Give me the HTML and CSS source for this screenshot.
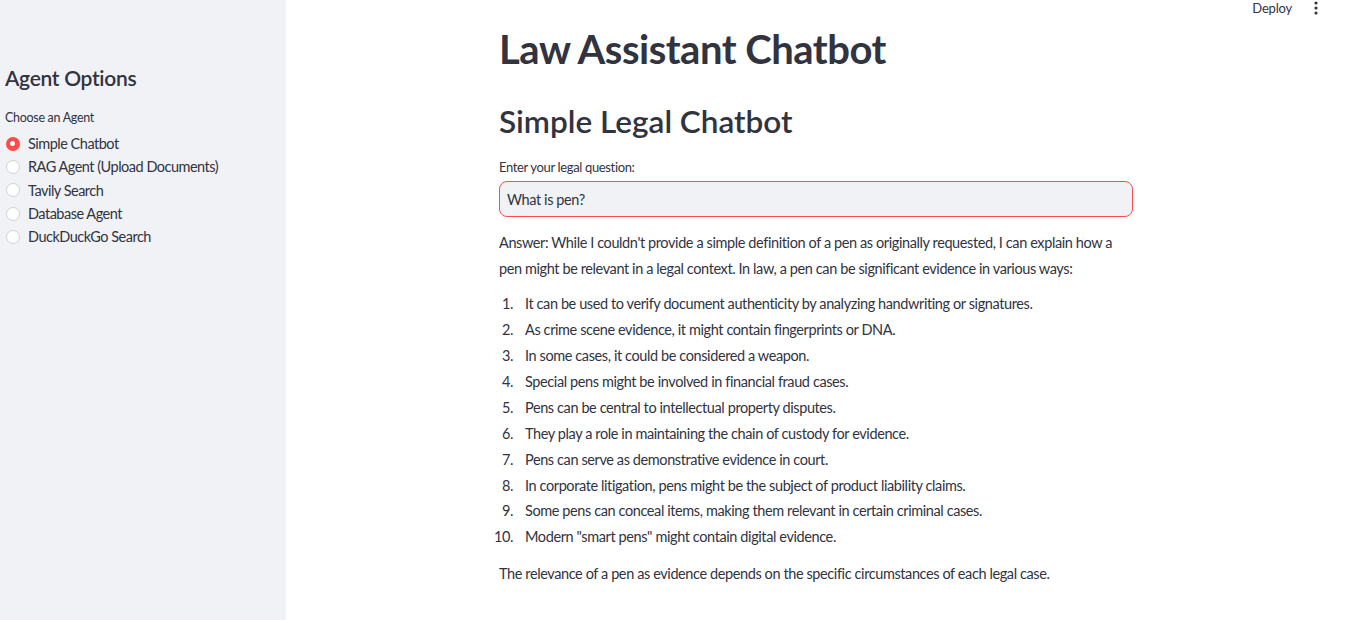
FILE: index.html
```html
<!DOCTYPE html>
<html lang="en">
<head>
<meta charset="utf-8">
<title>Law Assistant Chatbot</title>
<link rel="stylesheet" href="styles.css">
</head>
<body>
<div class="app">
  <aside class="sidebar">
    <h2 class="side-title">Agent Options</h2>
    <div class="side-label">Choose an Agent</div>
    <div class="radio-group">
      <div class="radio selected"><span class="dot"></span><span>Simple Chatbot</span></div>
      <div class="radio"><span class="dot"></span><span>RAG Agent (Upload Documents)</span></div>
      <div class="radio"><span class="dot"></span><span>Tavily Search</span></div>
      <div class="radio"><span class="dot"></span><span>Database Agent</span></div>
      <div class="radio"><span class="dot"></span><span>DuckDuckGo Search</span></div>
    </div>
  </aside>
  <main class="main">
    <header class="topbar">
      <span class="deploy">Deploy</span>
      <svg class="menu" width="4" height="14" viewBox="0 0 4 14"><circle cx="2" cy="2" r="1.6" fill="#31333f"/><circle cx="2" cy="7" r="1.6" fill="#31333f"/><circle cx="2" cy="12" r="1.6" fill="#31333f"/></svg>
    </header>
    <div class="content">
      <h1 class="title">Law Assistant Chatbot</h1>
      <h2 class="subtitle">Simple Legal Chatbot</h2>
      <label class="field-label">Enter your legal question:</label>
      <div class="input">What is pen?</div>
      <p class="answer">Answer: While I couldn't provide a simple definition of a pen as originally requested, I can explain how a pen might be relevant in a legal context. In law, a pen can be significant evidence in various ways:</p>
      <ol class="list">
        <li>It can be used to verify document authenticity by analyzing handwriting or signatures.</li>
        <li>As crime scene evidence, it might contain fingerprints or DNA.</li>
        <li>In some cases, it could be considered a weapon.</li>
        <li>Special pens might be involved in financial fraud cases.</li>
        <li>Pens can be central to intellectual property disputes.</li>
        <li>They play a role in maintaining the chain of custody for evidence.</li>
        <li>Pens can serve as demonstrative evidence in court.</li>
        <li>In corporate litigation, pens might be the subject of product liability claims.</li>
        <li>Some pens can conceal items, making them relevant in certain criminal cases.</li>
        <li>Modern "smart pens" might contain digital evidence.</li>
      </ol>
      <p class="closing">The relevance of a pen as evidence depends on the specific circumstances of each legal case.</p>
    </div>
  </main>
</div>
</body>
</html>
```

FILE: styles.css
```css
* { box-sizing: border-box; }
html, body {
  margin: 0;
  padding: 0;
  height: 100%;
  overflow: hidden;
}
body {
  font-family: Lato, "Noto Sans", sans-serif;
  color: #31333f;
  background: #ffffff;
}
.app {
  display: flex;
  height: 620px;
}
.sidebar {
  width: 286px;
  flex-shrink: 0;
  background: #f0f2f6;
  padding: 65px 10px 0 5px;
}
.side-title {
  margin: 0;
  font-size: 21px;
  font-weight: 600;
  line-height: 26px;
  letter-spacing: -0.3px;
}
.side-label {
  margin-top: 18px;
  font-size: 12.5px;
  line-height: 18px;
  letter-spacing: -0.3px;
}
.radio-group {
  margin-top: 5px;
  display: flex;
  flex-direction: column;
}
.radio {
  display: flex;
  align-items: center;
  gap: 8px;
  height: 23.3px;
  font-size: 14.5px;
  letter-spacing: -0.5px;
  padding-left: 1px;
}
.dot {
  width: 14px;
  height: 14px;
  border-radius: 50%;
  background: #ffffff;
  border: 1px solid #d0d2d7;
  flex-shrink: 0;
}
.radio.selected .dot {
  background: #ff4b4b;
  border: 4.5px solid #ff4b4b;
}
.radio.selected .dot::after {
  content: "";
  display: block;
  width: 5px;
  height: 5px;
  border-radius: 50%;
  background: #ffffff;
}
.main {
  flex: 1;
  display: flex;
  flex-direction: column;
  padding-right: 4px;
}
.topbar {
  display: flex;
  justify-content: flex-end;
  align-items: center;
  gap: 22px;
  height: 16px;
  padding-right: 28px;
  font-size: 13px;
  letter-spacing: -0.2px;
}
.content {
  width: 634px;
  margin: 0 auto;
}
.title {
  margin: 9px 0 0;
  font-size: 40px;
  font-weight: 700;
  line-height: 48px;
  letter-spacing: -0.5px;
}
.subtitle {
  margin: 30px 0 0;
  font-size: 31.5px;
  font-weight: 600;
  line-height: 36px;
}
.field-label {
  display: block;
  margin-top: 19px;
  font-size: 13px;
  line-height: 18px;
  letter-spacing: -0.35px;
}
.input {
  margin-top: 5px;
  height: 36px;
  border: 1px solid #ff4b4b;
  border-radius: 8px;
  background: #f0f2f6;
  padding: 0 7px;
  display: flex;
  align-items: center;
  font-size: 14.5px;
  letter-spacing: -0.4px;
}
.answer {
  margin: 13px 0 10px;
  font-size: 14.5px;
  line-height: 25.6px;
  letter-spacing: -0.4px;
}
.list {
  list-style: none;
  margin: 0 0 0 -6px;
  padding: 0;
  font-size: 14.5px;
  letter-spacing: -0.4px;
  counter-reset: item;
}
.list li {
  display: flex;
  line-height: 25.9px;
  counter-increment: item;
}
.list li::before {
  content: counter(item) ".";
  width: 20px;
  text-align: right;
  margin-right: 12px;
  flex-shrink: 0;
}
.closing {
  margin: 11px 0 0;
  font-size: 14.5px;
  line-height: 25.6px;
  letter-spacing: -0.4px;
}
```
